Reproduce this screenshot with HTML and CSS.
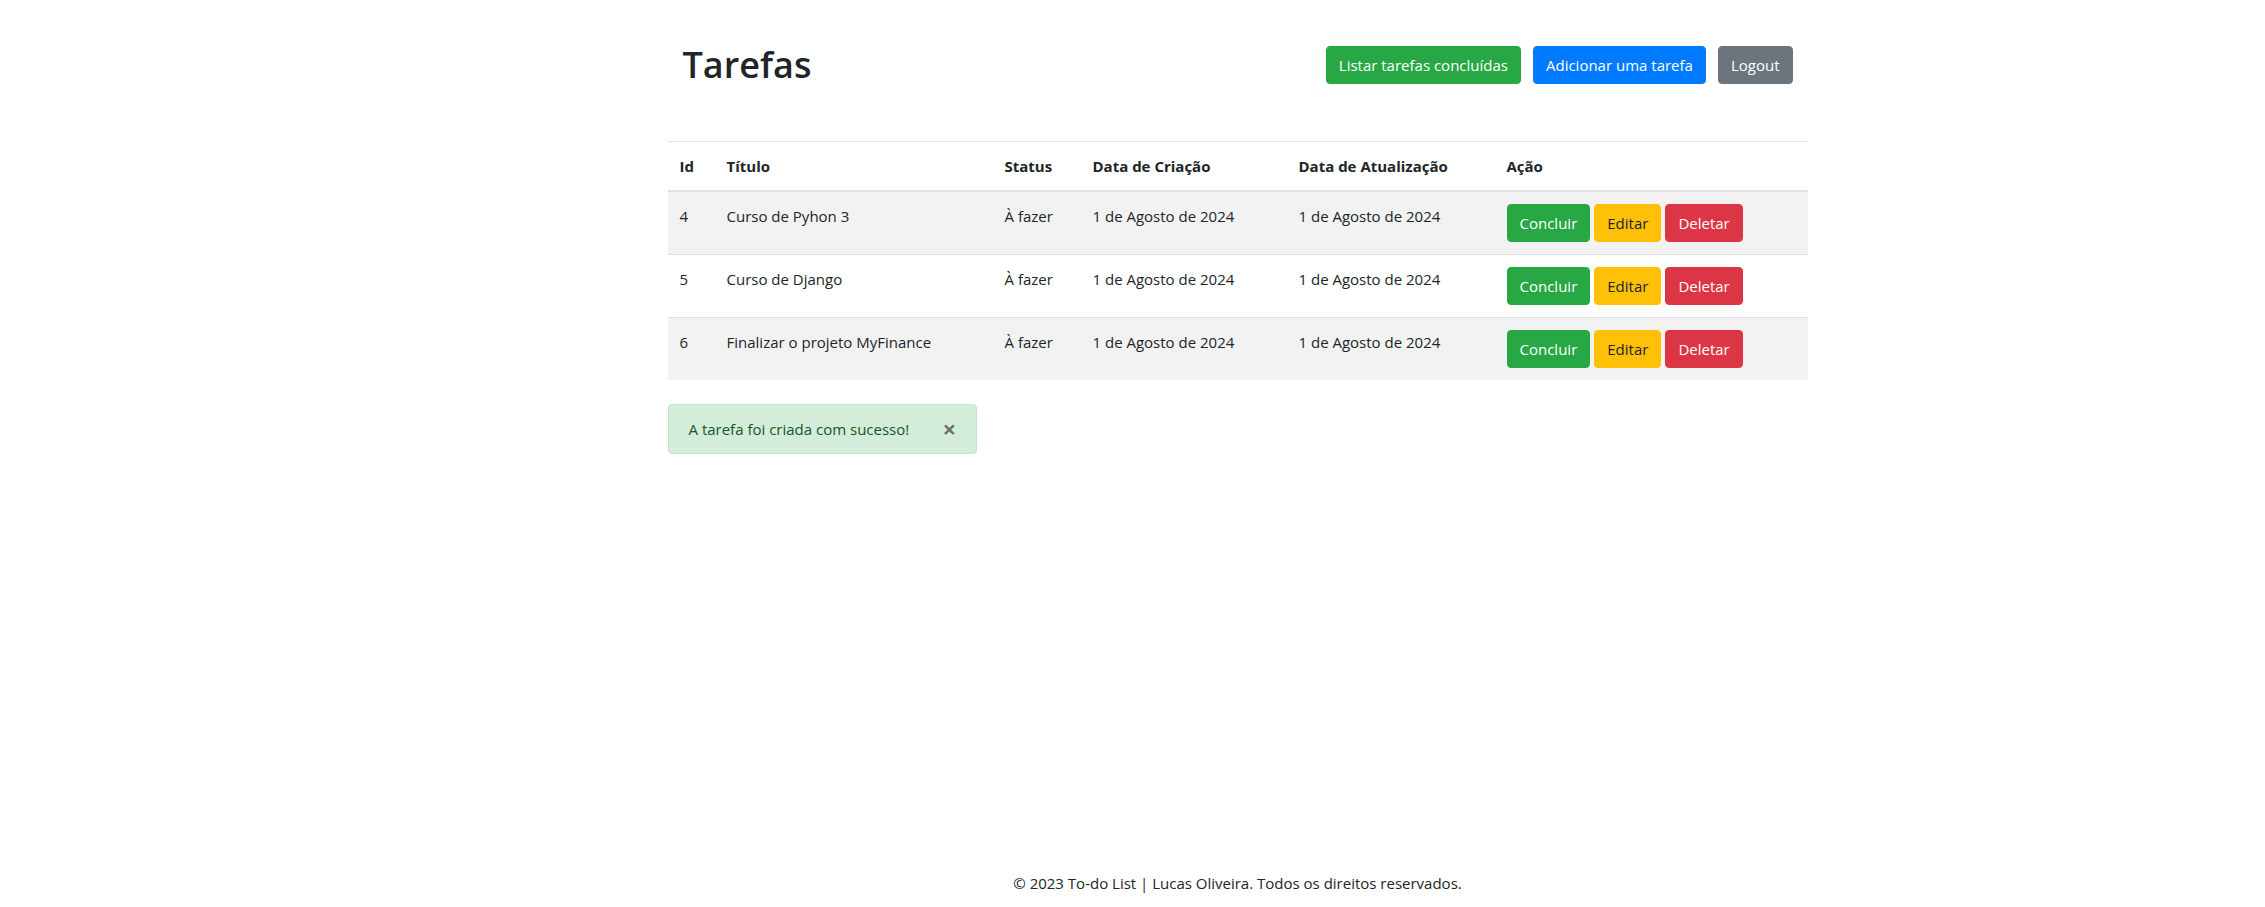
FILE: index.html
```html
<!DOCTYPE html>
<html lang="pt-br">
<head>
<meta charset="utf-8">
<title>Tarefas</title>
<link rel="stylesheet" href="styles.css">
</head>
<body>
<main class="container">
  <header class="page-header">
    <h1 class="page-title">Tarefas</h1>
    <nav class="header-actions">
      <a class="btn btn-success" href="#">Listar tarefas concluídas</a>
      <a class="btn btn-primary" href="#">Adicionar uma tarefa</a>
      <a class="btn btn-secondary" href="#">Logout</a>
    </nav>
  </header>

  <table class="table">
    <thead>
      <tr>
        <th class="col-id">Id</th>
        <th class="col-title">Título</th>
        <th class="col-status">Status</th>
        <th class="col-created">Data de Criação</th>
        <th class="col-updated">Data de Atualização</th>
        <th class="col-action">Ação</th>
      </tr>
    </thead>
    <tbody>
      <tr>
        <td>4</td>
        <td>Curso de Pyhon 3</td>
        <td>À fazer</td>
        <td>1 de Agosto de 2024</td>
        <td>1 de Agosto de 2024</td>
        <td><div class="actions"><a class="btn btn-success" href="#">Concluir</a><a class="btn btn-warning" href="#">Editar</a><a class="btn btn-danger" href="#">Deletar</a></div></td>
      </tr>
      <tr>
        <td>5</td>
        <td>Curso de Django</td>
        <td>À fazer</td>
        <td>1 de Agosto de 2024</td>
        <td>1 de Agosto de 2024</td>
        <td><div class="actions"><a class="btn btn-success" href="#">Concluir</a><a class="btn btn-warning" href="#">Editar</a><a class="btn btn-danger" href="#">Deletar</a></div></td>
      </tr>
      <tr>
        <td>6</td>
        <td>Finalizar o projeto MyFinance</td>
        <td>À fazer</td>
        <td>1 de Agosto de 2024</td>
        <td>1 de Agosto de 2024</td>
        <td><div class="actions"><a class="btn btn-success" href="#">Concluir</a><a class="btn btn-warning" href="#">Editar</a><a class="btn btn-danger" href="#">Deletar</a></div></td>
      </tr>
    </tbody>
  </table>

  <div class="alert alert-success" role="alert">
    A tarefa foi criada com sucesso!
    <button type="button" class="close" aria-label="Close"><span aria-hidden="true">&times;</span></button>
  </div>
</main>

<footer class="footer">
  <p>&copy; 2023 To-do List | Lucas Oliveira. Todos os direitos reservados.</p>
</footer>
</body>
</html>
```

FILE: styles.css
```css
*, *::before, *::after { box-sizing: border-box; }

html, body { height: 100%; }

body {
  margin: 0;
  padding-left: 210px;
  min-height: 100vh;
  display: flex;
  flex-direction: column;
  font-family: "Open Sans", "Noto Sans", sans-serif;
  font-size: 15px;
  line-height: 24px;
  color: #212529;
  background: #fff;
}

.container {
  width: 1140px;
  margin: 0 auto;
  flex: 1 0 auto;
}

.page-header {
  display: flex;
  justify-content: space-between;
  align-items: center;
  padding: 0 15px;
  margin-top: 41px;
  margin-bottom: 52px;
}

.page-title {
  margin: 0;
  font-size: 36px;
  font-weight: 600;
  line-height: 48px;
}

.header-actions {
  display: flex;
  gap: 12px;
}

.btn {
  display: inline-block;
  padding: 6px 12px;
  font-size: 15px;
  line-height: 24px;
  border: 1px solid transparent;
  border-radius: 4px;
  text-decoration: none;
  color: #fff;
  white-space: nowrap;
}

.btn-success { background: #28a745; border-color: #28a745; }
.btn-primary { background: #007bff; border-color: #007bff; }
.btn-secondary { background: #6c757d; border-color: #6c757d; }
.btn-warning { background: #ffc107; border-color: #ffc107; color: #212529; }
.btn-danger { background: #dc3545; border-color: #dc3545; }

.table {
  width: 100%;
  border-collapse: collapse;
  margin-bottom: 16px;
  color: #212529;
}

.table th, .table td {
  padding: 12px;
  text-align: left;
  vertical-align: top;
  border-top: 1px solid #dee2e6;
}

.table thead th {
  vertical-align: bottom;
  border-bottom: 2px solid #dee2e6;
  font-weight: 700;
}

.table tbody tr:nth-child(odd) { background: #f2f2f2; }

.col-id { width: 47px; }
.col-title { width: 278px; }
.col-status { width: 88px; }
.col-created { width: 206px; }
.col-updated { width: 208px; }
.col-action { width: 313px; }

.actions {
  display: flex;
  gap: 4px;
}

.alert {
  position: relative;
  display: inline-block;
  margin-top: 8px;
  padding: 12px 67px 12px 20px;
  border: 1px solid transparent;
  border-radius: 4px;
}

.alert-success {
  color: #155724;
  background: #d4edda;
  border-color: #c3e6cb;
}

.close {
  position: absolute;
  top: 0;
  right: 0;
  padding: 12px 20px;
  background: transparent;
  border: 0;
  font-family: "Open Sans", sans-serif;
  font-size: 24px;
  font-weight: 700;
  line-height: 24px;
  color: #000;
  opacity: .5;
  text-shadow: 0 1px 0 #fff;
  cursor: pointer;
}

.footer {
  flex-shrink: 0;
  text-align: center;
  padding: 12px 0;
}

.footer p { margin: 0; }
```
